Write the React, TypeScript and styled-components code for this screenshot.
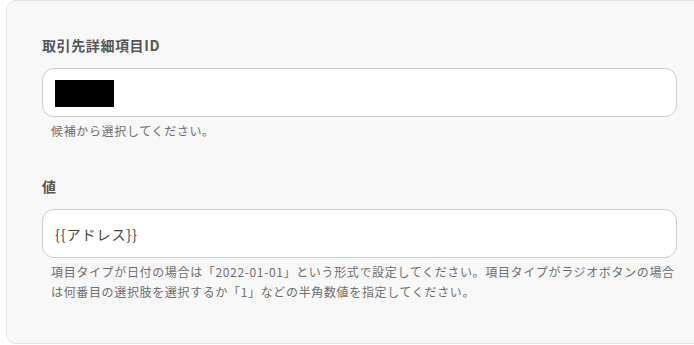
import React from 'react';
import styled, { createGlobalStyle } from 'styled-components';

const GlobalStyle = createGlobalStyle`
  body {
    margin: 0;
    background: #ffffff;
    font-family: "Noto Sans CJK JP", "Noto Sans", sans-serif;
  }
`;

const Page = styled.div`
  width: 694px;
  height: 345px;
  overflow: hidden;
  padding-left: 6px;
  box-sizing: border-box;
`;

const Panel = styled.div`
  width: 720px;
  height: 344px;
  box-sizing: border-box;
  background: #f8f8f8;
  border: 1px solid #e3e3e3;
  border-radius: 10px;
  padding: 31px 0 0 35px;
`;

const Field = styled.div`
  width: 635px;
  margin-bottom: 32px;
`;

const Label = styled.div`
  font-size: 14px;
  font-weight: 700;
  letter-spacing: 0.6px;
  color: #555555;
  line-height: 26px;
  margin-bottom: 10px;
`;

const InputBox = styled.div`
  height: 49px;
  box-sizing: border-box;
  background: #ffffff;
  border: 1px solid #cccccc;
  border-radius: 12px;
  display: flex;
  align-items: center;
  padding: 0 12px;
  font-size: 14px;
  letter-spacing: 1px;
  color: #444444;
`;

const Masked = styled.span`
  display: inline-block;
  width: 59px;
  height: 27px;
  background: #000000;
  margin-top: 2px;
`;

const Help = styled.p`
  margin: 4px 0 0;
  padding-left: 9px;
  font-size: 12px;
  letter-spacing: 0.65px;
  line-height: 20px;
  color: #6f6f6f;
`;

export default function App() {
  return (
    <>
      <GlobalStyle />
      <Page>
        <Panel>
          <Field>
            <Label>取引先詳細項目ID</Label>
            <InputBox>
              <Masked />
            </InputBox>
            <Help>候補から選択してください。</Help>
          </Field>
          <Field>
            <Label>値</Label>
            <InputBox>{'{{アドレス}}'}</InputBox>
            <Help>
              項目タイプが日付の場合は「2022-01-01」という形式で設定してください。項目タイプがラジオボタンの場合は何番目の選択肢を選択するか「1」などの半角数値を指定してください。
            </Help>
          </Field>
        </Panel>
      </Page>
    </>
  );
}
